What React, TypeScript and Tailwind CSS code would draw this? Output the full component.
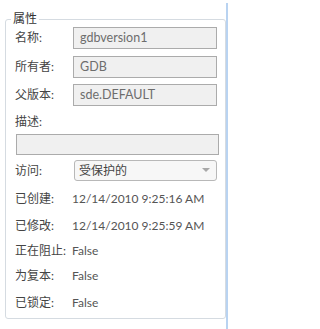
import React from "react";

const font = { fontFamily: 'Lato, "Noto Sans CJK SC", sans-serif' };

const Field = ({ label, value, className }: { label: string; value: string; className: string }) => (
  <div className={`flex items-center ${className}`}>
    <div className="w-[58px] text-[12px] text-[#444]">{label}</div>
    <div className="h-[22px] w-[144px] border border-[#ababab] bg-[#f0f0f0] pl-[6px] text-[12.5px] leading-[20px] text-[#6d6d6d]">
      {value}
    </div>
  </div>
);

const InfoRow = ({ label, value, className }: { label: string; value: string; className: string }) => (
  <div className={`flex h-[16px] items-center text-[12px] text-[#444] ${className}`}>
    <div className="w-[57px] whitespace-nowrap">{label}</div>
    <div className="text-[12px] text-[#555]">{value}</div>
  </div>
);

const App = () => {
  return (
    <div className="flex h-[329px] w-[232px] bg-white" style={font}>
      <div className="w-[226px] pl-[5px] pt-[12px]">
        <fieldset className="h-[307px] w-[220px] rounded-[3px] border border-[#d5dbe1] pl-[9px] pr-[6px]">
          <legend className="-ml-[4px] px-[2px] text-[12px] leading-[14px] text-[#333]">属性</legend>
          <Field label="名称:" value="gdbversion1" className="mt-[1px]" />
          <Field label="所有者:" value="GDB" className="mt-[7px]" />
          <Field label="父版本:" value="sde.DEFAULT" className="mt-[6px]" />
          <div className="mt-[8px] flex h-[16px] items-center text-[12px] text-[#444]">描述:</div>
          <div className="ml-[1px] mt-[4px] h-[21px] w-[203px] border border-[#ababab] bg-[#f0f0f0]" />
          <div className="mt-[5px] flex items-center">
            <div className="w-[59px] text-[12px] text-[#444]">访问:</div>
            <div className="flex h-[21px] w-[143px] items-center justify-between rounded-[3px] border border-[#b8b8b8] bg-[#f7f7f7] pl-[4px] pr-[6px]">
              <span className="text-[12px] text-[#444]">受保护的</span>
              <svg width="8" height="5" viewBox="0 0 8 5">
                <path d="M0 0 L8 0 L4 4 Z" fill="#a8a8a8" />
              </svg>
            </div>
          </div>
          <InfoRow label="已创建:" value="12/14/2010 9:25:16 AM" className="mt-[10px]" />
          <InfoRow label="已修改:" value="12/14/2010 9:25:59 AM" className="mt-[11px]" />
          <InfoRow label="正在阻止:" value="False" className="mt-[9px]" />
          <InfoRow label="为复本:" value="False" className="mt-[9px]" />
          <InfoRow label="已锁定:" value="False" className="mt-[11px]" />
        </fieldset>
      </div>
      <div className="mt-[3px] h-[326px] w-[2px] bg-[#b9d3f1]" />
    </div>
  );
};

export default App;
